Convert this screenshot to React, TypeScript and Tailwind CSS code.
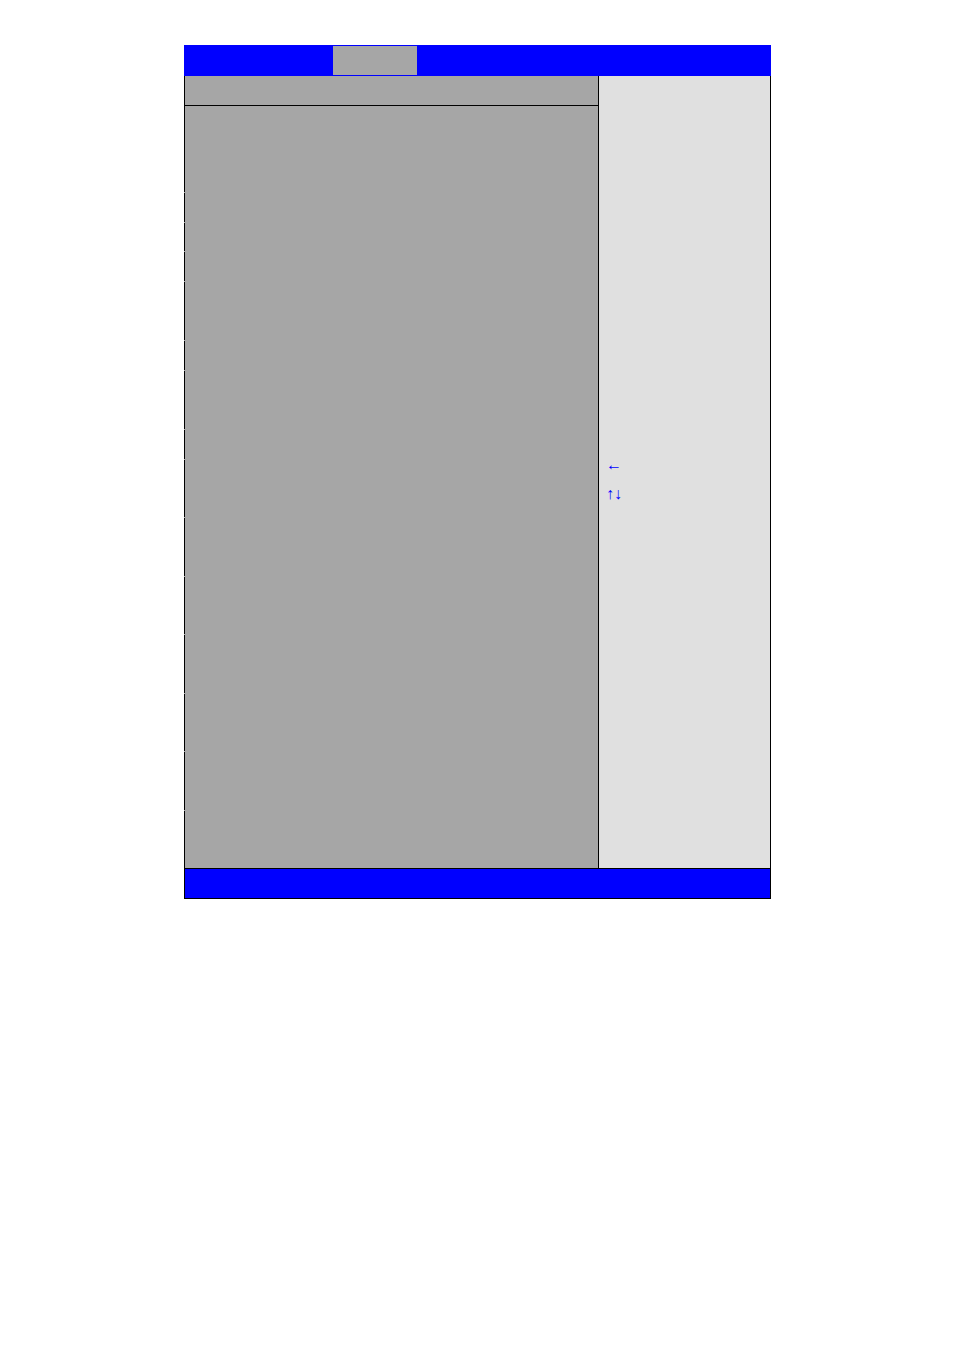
const rows = [
  "h-[87px]",
  "h-[30px]",
  "h-[29px]",
  "h-[30px]",
  "h-[59px]",
  "h-[30px]",
  "h-[59px]",
  "h-[30px]",
  "h-[58px]",
  "h-[59px]",
  "h-[58px]",
  "h-[59px]",
  "h-[58px]",
  "h-[59px]",
];

const keys = ["←", "↑↓"];

export default function App() {
  return (
    <div className="min-h-screen bg-white pt-[45px] pr-[183px] pl-[184px]">
      <main>
        {/* Menu bar */}
        <header className="flex h-[31px] bg-[#0000ff] py-px pl-[149px]">
          <div className="w-[84px] bg-[#a6a6a6]" />
        </header>

        <div className="flex">
          {/* Setup items */}
          <section className="flex flex-1 flex-col bg-[#a6a6a6]">
            <div className="h-[30px] border-b border-l border-black" />
            {rows.map((height, index) => (
              <div key={index} className={`${height} pb-px`}>
                <div className="h-full border-l border-black" />
              </div>
            ))}
            <div className="h-[57px] border-l border-black" />
          </section>

          {/* Help panel */}
          <aside className="w-[173px] border-x border-black bg-[#e0e0e0] pt-[374px] pl-[7px]">
            <ul className="font-['Liberation_Serif',serif] text-base leading-[29px] text-[#0000ff]">
              {keys.map((key) => (
                <li key={key}>{key}</li>
              ))}
            </ul>
          </aside>
        </div>

        <footer className="h-[31px] border border-black bg-[#0000ff]" />
      </main>
    </div>
  );
}
